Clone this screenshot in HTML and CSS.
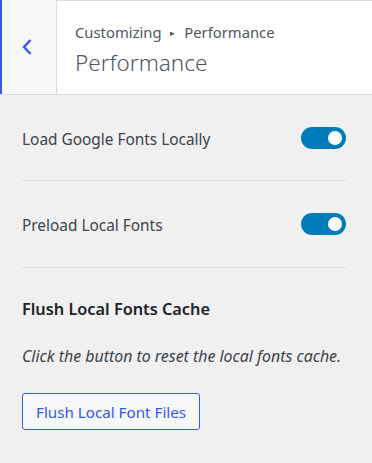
FILE: index.html
```html
<!DOCTYPE html>
<html lang="en">
<head>
  <meta charset="UTF-8">
  <title>Performance</title>
  <link rel="stylesheet" href="styles.css">
</head>
<body>

  <div class="panel">
    <div class="panel-header">
      <button class="btn-back" aria-label="Back">
        <svg width="12" height="18" viewBox="0 0 12 18"><path d="M9.5 2 L3 9 L9.5 16" fill="none" stroke="#3858e9" stroke-width="2.4"/></svg>
      </button>
      <div class="panel-title">
        <span class="crumbs">Customizing <span class="sep">&#9656;</span> Performance</span>
        <h3>Performance</h3>
      </div>
    </div>

    <div class="controles">
      <div class="control-toggle">
        <span class="label">Load Google Fonts Locally</span>
        <span class="toggle"><span class="knob"></span></span>
      </div>
      <div class="control-toggle">
        <span class="label">Preload Local Fonts</span>
        <span class="toggle"><span class="knob"></span></span>
      </div>
      <div class="control-flush">
        <h4>Flush Local Fonts Cache</h4>
        <p>Click the button to reset the local fonts cache.</p>
        <button class="btn-flush">Flush Local Font Files</button>
      </div>
    </div>
  </div>

</body>
</html>
```

FILE: styles.css
```css
body {
  margin: 0;
  font-family: "Noto Sans", sans-serif;
  background-color: #f0f0f1;
  color: #3c434a;
}

.panel {
  width: 372px;
  height: 463px;
  overflow: hidden;
}

.panel-header {
  display: flex;
  height: 93px;
  border-top: 1px solid #dcdcde;
  border-bottom: 1px solid #dcdcde;
  background-color: #fff;
}

.btn-back {
  width: 57px;
  margin-top: -1px;
  padding: 0 4px 0 0;
  border: none;
  border-left: 2px solid #3858e9;
  border-right: 1px solid #dcdcde;
  background-color: #f6f7f7;
  display: flex;
  align-items: center;
  justify-content: center;
}

.panel-title {
  padding: 19px 0 0 18px;
  display: flex;
  flex-direction: column;
}

.crumbs {
  font-size: 14.8px;
  color: #50575e;
  line-height: 24px;
  white-space: nowrap;
}

.crumbs .sep {
  font-size: 9px;
  margin: 0 5px;
  vertical-align: 2px;
}

.panel-title h3 {
  margin: 3px 0 0;
  font-size: 22.5px;
  font-weight: 300;
  color: #50575e;
  line-height: 30px;
}

.controles {
  padding: 0 26px 0 22px;
}

.control-toggle {
  display: flex;
  justify-content: space-between;
  align-items: center;
  height: 85px;
  border-bottom: 1px solid #dcdcde;
  font-size: 15.4px;
  color: #3c434a;
}

.control-toggle + .control-toggle {
  height: 86px;
}

.control-toggle .label {
  padding-top: 3px;
}

.toggle {
  width: 45px;
  height: 22px;
  border-radius: 11px;
  background-color: #007cba;
  display: flex;
  align-items: center;
  justify-content: flex-end;
  padding-right: 4px;
  box-sizing: border-box;
}

.knob {
  width: 14px;
  height: 14px;
  border-radius: 50%;
  background-color: #fff;
}

.control-flush h4 {
  margin: 30px 0 0;
  font-size: 16.3px;
  font-weight: 600;
  color: #1d2327;
}

.control-flush p {
  margin: 25px 0 0;
  font-size: 15.9px;
  font-style: italic;
  color: #3c434a;
}

.btn-flush {
  margin-top: 26px;
  height: 37px;
  padding: 0 13px;
  font-family: inherit;
  font-size: 15.2px;
  color: #3858e9;
  background-color: #f6f7f7;
  border: 1px solid #3858e9;
  border-radius: 3px;
}
```
